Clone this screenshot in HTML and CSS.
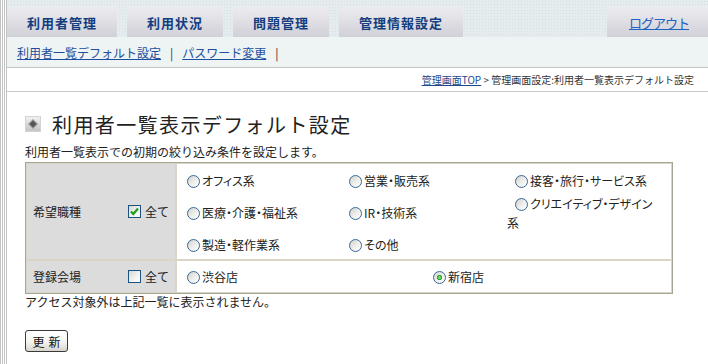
FILE: index.html
```html
<!DOCTYPE html>
<html lang="ja">
<head>
   <meta charset="UTF-8">
   <meta name="viewport" content="width=device-width, initial-scale=1.0">
   <title>利用者一覧表示デフォルト設定</title>
   <link rel="stylesheet" href="styles.css">
</head>
<body>
<div class="frame">
    <div class="edge"></div>
    <div class="page">
        <div class="tabs">
            <a class="tab" href="#">利用者管理</a>
            <a class="tab" href="#">利用状況</a>
            <a class="tab" href="#">問題管理</a>
            <a class="tab" href="#">管理情報設定</a>
            <a class="tab tab-logout" href="#">ログアウト</a>
        </div>

        <div class="subnav">
            <a href="#">利用者一覧デフォルト設定</a>
            <span class="sep">|</span>
            <a href="#">パスワード変更</a>
            <span class="sep">|</span>
        </div>

        <div class="crumbs">
            <a href="#">管理画面TOP</a>
            <span>&gt; 管理画面設定:利用者一覧表示デフォルト設定</span>
        </div>

        <div class="main">
            <h1 class="title">
                <svg class="title-icon" width="16" height="16" viewBox="0 0 16 16">
                    <defs>
                        <linearGradient id="iconBg" x1="0" y1="0" x2="0" y2="1">
                            <stop offset="0" stop-color="#f2f2f2"/>
                            <stop offset="1" stop-color="#c2c2c2"/>
                        </linearGradient>
                    </defs>
                    <rect x="0.5" y="0.5" width="15" height="15" fill="url(#iconBg)" stroke="#d4d4d4"/>
                    <polygon points="8,3 13,8 8,13 3,8" fill="#9a9a9a"/>
                    <polygon points="8,4.5 11.5,8 8,11.5 4.5,8" fill="#555"/>
                </svg>
                利用者一覧表示デフォルト設定
            </h1>
            <p class="desc">利用者一覧表示での初期の絞り込み条件を設定します。</p>

            <table class="filter">
                <tr>
                    <th>
                        <div class="head">
                            <span>希望職種</span>
                            <span class="all">
                                <span class="check">
                                    <svg width="11" height="11" viewBox="0 0 11 11"><path d="M2 5.5 L4.3 8 L9 2.5" fill="none" stroke="#21a121" stroke-width="2.2"/></svg>
                                </span>全て
                            </span>
                        </div>
                    </th>
                    <td>
                        <div class="opts opts-job">
                            <span class="opt"><span class="radio"></span>オフィス系</span>
                            <span class="opt"><span class="radio"></span>営業・販売系</span>
                            <span class="opt"><span class="radio"></span>接客・旅行・サービス系</span>
                            <span class="opt"><span class="radio"></span>医療・介護・福祉系</span>
                            <span class="opt"><span class="radio"></span>IR・技術系</span>
                            <span class="opt"><span class="radio"></span>クリエイティブ・デザイン<br>系</span>
                            <span class="opt"><span class="radio"></span>製造・軽作業系</span>
                            <span class="opt"><span class="radio"></span>その他</span>
                        </div>
                    </td>
                </tr>
                <tr>
                    <th>
                        <div class="head">
                            <span>登録会場</span>
                            <span class="all"><span class="check"></span>全て</span>
                        </div>
                    </th>
                    <td>
                        <div class="opts opts-place">
                            <span class="opt"><span class="radio"></span>渋谷店</span>
                            <span class="opt"><span class="radio on"></span>新宿店</span>
                        </div>
                    </td>
                </tr>
            </table>

            <p class="note">アクセス対象外は上記一覧に表示されません。</p>

            <div class="actions">
                <button class="btn" type="button">更新</button>
            </div>
        </div>
    </div>
</div>
</body>
</html>
```
FILE: styles.css
```css
* {
    box-sizing: border-box;
}

body {
    margin: 0;
    font-family: "Noto Sans CJK JP", "Noto Sans", sans-serif;
    font-size: 12px;
    color: #222;
    background: #fff;
}

.frame {
    display: flex;
    min-height: 364px;
}

.edge {
    width: 7px;
    flex: none;
    background: repeating-linear-gradient(to right, #c2c2c2 0 1px, #fff 1px 2px);
}

.page {
    flex: 1;
    min-width: 0;
}

/* top tabs */
.tabs {
    display: flex;
    gap: 10px;
    height: 37px;
    padding-top: 7px;
    background-color: #e4ecee;
    background-image: radial-gradient(#d6e0e4 0.8px, transparent 1px);
    background-size: 3px 3px;
}

.tab {
    display: flex;
    align-items: center;
    height: 30px;
    padding: 0 20px;
    background: linear-gradient(#ececf0, #d0d0d7);
    color: #123e80;
    font-size: 13px;
    font-weight: bold;
    letter-spacing: 1px;
    text-decoration: none;
}

.tab-logout {
    margin-left: auto;
    width: 101px;
    padding: 0 0 0 22px;
    color: #1f62c4;
    font-weight: normal;
    letter-spacing: -1px;
    text-decoration: underline;
}

.subnav {
    display: flex;
    align-items: center;
    height: 31px;
    padding-left: 10px;
    background: #eef3f3;
    border-bottom: 1px solid #c4c4c4;
}

.subnav a {
    color: #1d4f9c;
}

.subnav .sep {
    margin: 0 9px;
    color: #333;
}

.crumbs {
    height: 24px;
    line-height: 23px;
    padding-right: 14px;
    text-align: right;
    font-size: 10px;
    color: #333;
    border-bottom: 1px solid #c8c8c8;
}

.crumbs a {
    color: #1a4a8c;
}

/* content */
.main {
    padding-left: 18px;
}

.title {
    display: flex;
    align-items: center;
    gap: 11px;
    height: 28px;
    margin: 18px 0 0;
    font-size: 20px;
    font-weight: normal;
    letter-spacing: 1.4px;
    color: #222;
}

.title-icon {
    flex: none;
}

.desc {
    margin: 6px 0 0;
    line-height: 16px;
}

.filter {
    width: 648px;
    margin-top: 2px;
    border-collapse: separate;
    border-spacing: 0;
    border: 1px solid #a8a596;
}

.filter th,
.filter td {
    padding: 0;
    border: 1px solid #d9d6c8;
    vertical-align: middle;
}

.filter th {
    width: 150px;
    padding: 0 6px;
    background: #dcdcdc;
    font-weight: normal;
    text-align: left;
}

.head {
    display: flex;
    justify-content: space-between;
    align-items: center;
}

.all {
    display: flex;
    align-items: center;
}

.check {
    display: inline-flex;
    align-items: center;
    justify-content: center;
    width: 13px;
    height: 13px;
    margin-right: 4px;
    border: 1px solid #1c5180;
    background: linear-gradient(135deg, #d6d6d0, #f4f4f2 60%, #fff);
}

.opts {
    display: grid;
    padding-left: 2px;
    align-items: center;
}

.opts-job {
    grid-template-columns: 162px 166px 1fr;
    grid-template-rows: 32px 33px 30px;
    height: 95px;
}

.opts-place {
    grid-template-columns: 246px 1fr;
    height: 31px;
}

.opt {
    line-height: 19px;
    font-feature-settings: "palt";
}

.radio {
    display: inline-block;
    width: 13px;
    height: 13px;
    margin: 0 2px 0 8px;
    vertical-align: -2px;
    border-radius: 50%;
    border: 1px solid #3a6896;
    background: linear-gradient(135deg, #d2d2cc, #f2f2f0 60%, #fff);
}

.radio.on {
    background:
        radial-gradient(circle, #6ad86a 0 1px, #21a121 2.2px, transparent 3px),
        linear-gradient(135deg, #d2d2cc, #f2f2f0 60%, #fff);
}

.note {
    margin: 0;
    line-height: 16px;
}

.actions {
    padding-top: 20px;
}

.btn {
    width: 43px;
    height: 22px;
    padding: 0 0 0 4px;
    font-family: inherit;
    font-size: 12px;
    letter-spacing: 4px;
    color: #111;
    border: 1px solid #3a3a3a;
    border-radius: 3px;
    background: linear-gradient(#fff, #f4f4f0 55%, #d8d4cc);
}
```
